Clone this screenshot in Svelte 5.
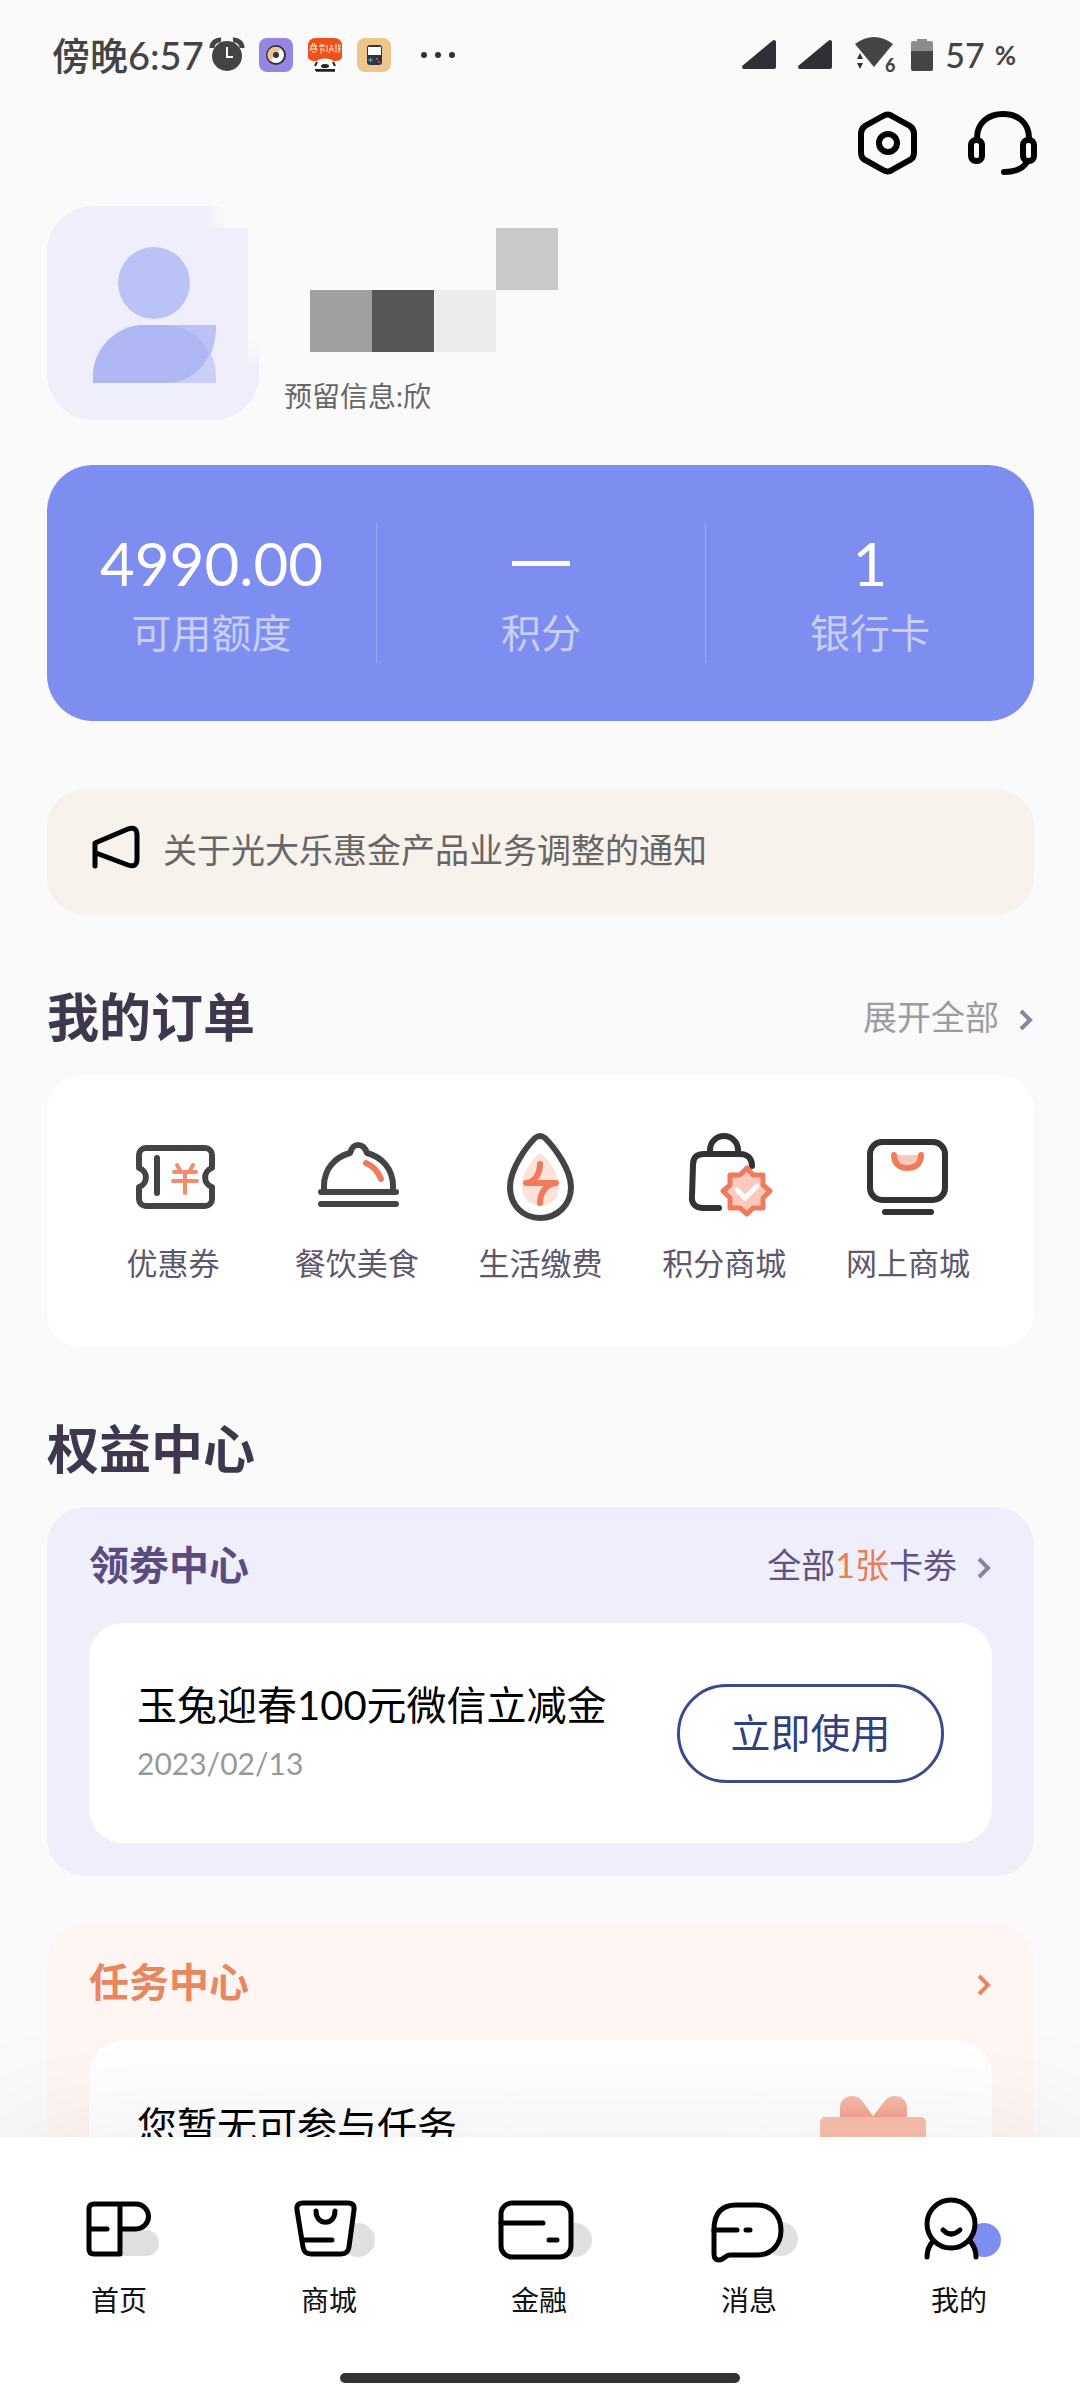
<script lang="ts">
    type Item = { icon: string; label: string };

    const stats = [
        { value: '4990.00', label: '可用额度' },
        { value: '', label: '积分' },
        { value: '1', label: '银行卡' }
    ];

    const orders: Item[] = [
        { icon: 'coupon', label: '优惠券' },
        { icon: 'food', label: '餐饮美食' },
        { icon: 'bill', label: '生活缴费' },
        { icon: 'points', label: '积分商城' },
        { icon: 'shop', label: '网上商城' }
    ];

    const tabs: Item[] = [
        { icon: 'home', label: '首页' },
        { icon: 'mall', label: '商城' },
        { icon: 'finance', label: '金融' },
        { icon: 'message', label: '消息' },
        { icon: 'me', label: '我的' }
    ];

    let active = $state('me');
</script>

{#snippet chevron()}
    <svg class="chevron" viewBox="0 0 16 24" width="16" height="24" aria-hidden="true">
        <path d="M3 3 L12 12 L3 21" fill="none" stroke="currentColor" stroke-width="4" />
    </svg>
{/snippet}

{#snippet orderIcon(name: string)}
    <svg class="order-icon" viewBox="0 0 96 96" aria-hidden="true">
        {#if name === 'coupon'}
            <path d="M22 19 H80 a7 7 0 0 1 7 7 V39 a10 10 0 0 0 0 19 V70 a7 7 0 0 1 -7 7 H21 a7 7 0 0 1 -7 -7 V58 a10 10 0 0 0 0 -19 V26 a7 7 0 0 1 7 -7 Z M32 29 V64" />
            <path class="accent thin" d="M52 36 L56 43 M68 36 L64 43 M49 43 H71 M48 52 H72 M60 43 V64" />
        {:else if name === 'food'}
            <path d="M12 63 H87 M12 75 H87 M15 62 V57 C15 40 26 28 41 24 C43 18 45 16 49 16 C53 16 56 18 58 24 C73 28 84 40 84 57 V62" />
            <path class="accent" d="M57 34 Q67 38 72 50" />
        {:else if name === 'bill'}
            <path class="soft" d="M48 24 C56 30 67 44 67 57 C67 69 59 77 48 77 C38 77 30 69 30 57 C30 44 40 30 48 24 Z" />
            <path d="M43 9 Q48 5 53 9 C63 19 79 41 79 58 C79 76 65 89 48 89 C31 89 18 76 18 58 C18 41 33 19 43 9 Z" />
            <path class="accent" d="M48 35 C48 45 42 54 34 54 H64 C54 55 48 64 48 74" />
        {:else if name === 'points'}
            <g class="dark">
                <path d="M34 24 V21 A14 14 0 0 1 62 21 V24" />
                <path d="M76 37 C76 29 71 25 64 25 H28 C20 25 17 29 17 36 L16 67 C15 75 20 79 27 79 H43" />
            </g>
            <path class="accent badge" d="M71 39 L77 46 L87 46 L87 56 L94 62 L87 69 L87 79 L77 79 L71 85 L64 79 L54 79 L54 69 L47 62 L54 56 L54 46 L64 46 Z" />
            <path class="check" d="M61 61 L69 69 L81 57" />
        {:else}
            <g class="dark">
                <rect x="10" y="13" width="75" height="58" rx="12" />
                <path d="M25 83 H71" />
            </g>
            <path class="accent smile" d="M34 26 C34 35 40 39 47 39 C55 39 61 35 61 26" />
        {/if}
    </svg>
{/snippet}

{#snippet tabIcon(name: string)}
    <svg class="tab-icon" viewBox="0 0 100 68" aria-hidden="true">
        {#if name === 'home'}
            <rect class="shade" x="39" y="34" width="51" height="26" rx="13" />
            <path class="body" d="M51 58 H25 Q20 58 20 53 V13 Q20 8 25 8 H67 A12 12 0 0 1 67 33 H51 Z M51 8 V58" />
            <path d="M21 33 H38" />
        {:else if name === 'mall'}
            <circle class="shade" cx="79" cy="44" r="17" />
            <path class="body" d="M24 7 H69 Q76 7 75 14 L70 51 Q69 58 62 58 H32 Q25 58 24 51 L18 14 Q17 7 24 7 Z" />
            <path d="M37 15 C37 30 56 30 56 15 M24 44 H53" />
        {:else if name === 'finance'}
            <circle class="shade" cx="86" cy="44" r="17" />
            <rect class="body" x="12" y="7" width="70" height="54" rx="11" />
            <path d="M12 27 H54 M60 44 H68" />
        {:else if name === 'message'}
            <circle class="shade" cx="82" cy="43" r="17" />
            <path class="body" d="M15 34 C15 18 22 9 37 9 H58 C73 9 82 20 82 34 C82 48 73 59 58 59 H31 C26 59 25 64 20 64 Q15 64 15 58 Z" />
            <path d="M15 34 H38 M47 34 H51" />
        {:else}
            <circle class="shade on" cx="75" cy="44" r="17" />
            <path class="body" d="M18 61 Q18 52 24 45 L61 45 Q67 52 67 61" />
            <circle class="body" cx="42" cy="28" r="24" />
            <path d="M34 34 Q42 42 51 34" />
        {/if}
    </svg>
{/snippet}

<div class="screen">
    <header class="status">
        <div class="status-left">
            <span class="clock">傍晚6:57</span>
            <svg width="34" height="34" viewBox="0 0 34 34" aria-hidden="true">
                <path d="M2 10 A8 8 0 0 1 11 2 M32 10 A8 8 0 0 0 23 2" stroke="#444" stroke-width="5" fill="none" />
                <circle cx="17" cy="18" r="15" fill="#444" />
                <path d="M17 9 V19 H23" stroke="#fafafa" stroke-width="2" fill="none" />
            </svg>
            <svg class="app" width="34" height="34" viewBox="0 0 34 34" aria-hidden="true">
                <rect width="34" height="34" rx="8" fill="#9686e2" />
                <circle cx="17" cy="17" r="9" fill="#fff" stroke="#33303c" stroke-width="2" />
                <path d="M11 23 A8 8 0 0 1 22 11 Z" fill="#eac591" />
                <circle cx="17" cy="17" r="3" fill="#33303c" />
            </svg>
            <svg class="app" width="34" height="34" viewBox="0 0 34 34" aria-hidden="true">
                <path d="M8 0 H26 Q34 0 34 8 V20 Q32 23 28 23 H6 Q2 23 0 20 V8 Q0 0 8 0 Z" fill="#ee5119" />
                <path d="M2 8 H9 M2 11 H9 M5 5 L2 13 M6 5 L9 13 M4 14 H8 M11 8 H17 M13 6 V9 M15 6 V9 M12 11 H16 V14 M13 11 V16 M19 7 V14 M22 8 H25 M21 11 H26 M24 8 L21 15 M24 11 L26 14 M28 6 V15 M30 8 H33 M30 11 H33 M31 6 V15" stroke="#ffe3d3" stroke-width="1" fill="none" />
                <path d="M4 34 C1 16 33 16 30 34 Z" fill="#fff" />
                <path d="M8 32 H27 V34 H8 Z" fill="#c9252b" />
                <path d="M9 24 L7 28 M25 24 L27 28 M7 32 H27" stroke="#222" stroke-width="2" />
                <ellipse cx="17" cy="28" rx="4" ry="2" fill="#222" />
            </svg>
            <svg class="app" width="34" height="34" viewBox="0 0 34 34" aria-hidden="true">
                <rect width="34" height="34" rx="8" fill="#edc68b" />
                <rect x="10" y="7" width="15" height="20" rx="3" fill="#33343f" />
                <rect x="11" y="9" width="13" height="8" fill="#fff" />
                <path d="M11 22 H16 M13.500 19.500 V24.500" stroke="#55b4c4" stroke-width="1" />
                <circle cx="20" cy="21" r="1" fill="#e0557a" />
                <circle cx="22" cy="24" r="1" fill="#e0557a" />
            </svg>
            <svg class="more" width="36" height="8" viewBox="0 0 36 8" aria-hidden="true">
                <circle cx="4" cy="4" r="3" /><circle cx="18" cy="4" r="3" /><circle cx="32" cy="4" r="3" />
            </svg>
        </div>
        <div class="status-right">
            {#each [1, 2] as sim (sim)}
                <svg class="signal" width="36" height="32" viewBox="0 0 36 32" aria-hidden="true">
                    <path d="M2 28 L32 3 V28 Z" fill="#2f2f35" stroke="#2f2f35" stroke-width="4" stroke-linejoin="round" />
                </svg>
            {/each}
            <svg width="42" height="38" viewBox="0 0 42 38" aria-hidden="true">
                <path d="M1 8 Q20 -6 39 8 L20 31 Z" fill="#444" />
                <path d="M6 17 L9 23 H3 Z M6 33 L9 27 H3 Z" fill="#333" />
                <text x="31" y="36" font-size="18" font-weight="900" fill="#444">6</text>
            </svg>
            <svg class="battery" width="22" height="34" viewBox="0 0 22 34" aria-hidden="true">
                <path d="M0 5 Q0 3 2 3 H6 V1 H16 V3 H20 Q22 3 22 5 V13 H0 Z" fill="#8c8c8c" />
                <path d="M0 13 H22 V31 Q22 33 20 33 H2 Q0 33 0 31 Z" fill="#444" />
            </svg>
            <span class="level">57</span>
            <span class="percent">%</span>
        </div>
    </header>

    <main>
        <div class="actions">
            <button aria-label="设置">
                <svg width="60" height="66" viewBox="0 0 60 66">
                    <path d="M25 6 Q30 3 34 6 L52 16 Q56 19 56 24 V42 Q56 48 52 50 L34 60 Q30 63 25 60 L7 50 Q3 48 3 42 V24 Q3 19 7 16 Z" />
                    <circle cx="30" cy="33" r="9" />
                </svg>
            </button>
            <button aria-label="客服">
                <svg width="70" height="66" viewBox="0 0 70 66">
                    <rect x="3" y="30" width="11" height="21" rx="5" />
                    <rect x="55" y="30" width="11" height="21" rx="5" />
                    <path d="M9 28 C9 13 20 4 35 4 C50 4 61 13 61 28" />
                    <path d="M59 52 C54 60 46 62 36 62" />
                </svg>
            </button>
        </div>

        <section class="profile">
            <svg class="avatar" viewBox="0 0 214 214" aria-label="头像">
                <defs>
                    <linearGradient id="fade-right">
                        <stop offset="0" stop-color="#fafafa" stop-opacity="0" />
                        <stop offset="1" stop-color="#fafafa" />
                    </linearGradient>
                    <linearGradient id="fade-down" x2="0" y2="1">
                        <stop offset="0" stop-color="#fafafa" />
                        <stop offset="1" stop-color="#fafafa" stop-opacity="0" />
                    </linearGradient>
                </defs>
                <rect width="212" height="214" rx="46" fill="#efeffb" />
                <rect x="160" width="20" height="22" fill="url(#fade-right)" />
                <rect x="180" width="34" height="22" fill="#fafafa" />
                <rect x="201" y="22" width="13" height="112" fill="#fafafa" />
                <rect x="201" y="134" width="13" height="28" fill="url(#fade-down)" />
                <rect x="180" y="22" width="21" height="26" fill="#efeffb" />
                <circle cx="107" cy="77" r="36" fill="#bac2f6" />
                <path d="M46 177 V170 C46 142 70 119 97 119 H118 C146 119 169 142 169 170 V177 Z" fill="#cbcff8" />
                <path d="M46 177 V170 C46 142 70 119 97 119 H169 C169 152 147 177 120 177 Z" fill="#aeb7f4" />
                <path d="M118 119 H169 C169 131 167 141 163 149 C155 131 138 119 118 119 Z" fill="#bac2f6" />
            </svg>
            <div class="who">
                <div class="mask" aria-hidden="true">
                    <i></i><i></i><i></i><i class="c4"></i>
                    <i class="c1"></i><i class="c2"></i><i class="c3"></i><i></i>
                </div>
                <p>预留信息:欣</p>
            </div>
        </section>

        <section class="stats">
            {#each stats as stat}
                <a href="#stats">
                    <strong>{#if stat.value}{stat.value}{:else}<span class="none"></span>{/if}</strong>
                    <span>{stat.label}</span>
                </a>
            {/each}
        </section>

        <a class="notice" href="#notice">
            <svg width="52" height="48" viewBox="0 0 52 48" aria-hidden="true">
                <path d="M4 43 V20 L37 6 Q46 3 46 12 V36 Q46 45 37 42 L5 30" />
            </svg>
            <span>关于光大乐惠金产品业务调整的通知</span>
        </a>

        <div class="section-head">
            <h2>我的订单</h2>
            <a href="#orders">展开全部 {@render chevron()}</a>
        </div>
        <section class="orders">
            {#each orders as item}
                <a href="#orders">
                    {@render orderIcon(item.icon)}
                    <span>{item.label}</span>
                </a>
            {/each}
        </section>

        <div class="section-head">
            <h2>权益中心</h2>
        </div>
        <section class="panel">
            <div class="panel-head">
                <h3>领劵中心</h3>
                <a href="#coupons"><span>全部<em>1张</em>卡劵</span> {@render chevron()}</a>
            </div>
            <div class="panel-body">
                <div>
                    <p class="name">玉兔迎春100元微信立减金</p>
                    <time>2023/02/13</time>
                </div>
                <button class="use">立即使用</button>
            </div>
        </section>

        <section class="panel tasks">
            <div class="panel-head">
                <h3>任务中心</h3>
                <a href="#tasks" aria-label="任务中心">{@render chevron()}</a>
            </div>
            <div class="panel-body">
                <p class="name">您暂无可参与任务</p>
                <svg width="106" height="106" viewBox="0 0 106 106" aria-hidden="true">
                    <defs>
                        <linearGradient id="bow" x2="0" y2="1">
                            <stop offset="0" stop-color="#f6bfae" />
                            <stop offset="1" stop-color="#f5a08a" />
                        </linearGradient>
                    </defs>
                    <path d="M20 24 V12 C20 3 27 0 32 0 C37 0 40 2 43 6 L53 20 L64 6 C67 2 70 0 75 0 C80 0 87 3 87 12 V24 Z" fill="url(#bow)" />
                    <rect y="21" width="106" height="28" rx="5" fill="#f8c0ad" />
                    <rect x="10" y="49" width="86" height="57" fill="#f6a58e" />
                </svg>
            </div>
        </section>
    </main>

    <footer>
        <nav>
            {#each tabs as tab}
                <button class:active={active === tab.icon} onclick={() => (active = tab.icon)}>
                    {@render tabIcon(tab.icon)}
                    <span>{tab.label}</span>
                </button>
            {/each}
        </nav>
        <div class="home-bar"></div>
    </footer>
</div>

<style>
    :global(body) {
        margin: 0;
        background: #fafafa;
    }

    .screen {
        height: 100vh;
        display: flex;
        flex-direction: column;
        overflow: hidden;
        background: #fafafa;
        color: #000;
        font-family: Lato, "Noto Sans CJK SC", sans-serif;
    }

    a {
        color: inherit;
        text-decoration: none;
    }

    button {
        border: 0;
        padding: 0;
        background: none;
        color: inherit;
        font-family: inherit;
    }

    h2, h3, p {
        margin: 0;
    }

    svg {
        display: block;
        flex: none;
        overflow: visible;
    }

    /* status bar */
    .status {
        height: 110px;
        flex: none;
        padding: 0 64px 0 52px;
        display: flex;
        align-items: center;
        justify-content: space-between;
        color: #444;
    }

    .status-left, .status-right {
        display: flex;
        align-items: center;
    }

    .clock {
        font-size: 38px;
        line-height: 48px;
        font-weight: 500;
        margin-right: 6px;
    }

    .app {
        margin-left: 15px;
    }

    .more {
        margin-left: 29px;
        fill: #333;
    }

    .signal {
        margin-right: 20px;
    }

    .battery {
        margin: 0 12px 0 15px;
    }

    .level {
        font-size: 34px;
        line-height: 40px;
        font-weight: 500;
    }

    .percent {
        margin-left: 10px;
        font-size: 26px;
        line-height: 40px;
        font-weight: 700;
    }

    main {
        flex: 1;
        min-height: 0;
        overflow: hidden;
        padding: 0 46px 0 47px;
    }

    .actions {
        display: flex;
        justify-content: flex-end;
        gap: 50px;
        margin-right: -4px;
    }

    .actions svg {
        fill: none;
        stroke: #000;
        stroke-width: 6;
        stroke-linecap: round;
    }

    .profile {
        display: flex;
        gap: 23px;
        margin-top: 30px;
    }

    .avatar {
        width: 214px;
        height: 214px;
    }

    .who {
        padding-top: 22px;
    }

    .mask {
        display: grid;
        grid-template-columns: repeat(4, 62px);
        grid-auto-rows: 62px;
        margin: 0 0 24px 26px;
    }

    .c1 { background: #a0a0a0; }
    .c2 { background: #575757; }
    .c3 { background: #ececec; }
    .c4 { background: #c9c9c9; }

    .who p {
        font-size: 28px;
        line-height: 40px;
        color: #666;
    }

    .stats {
        display: grid;
        grid-template-columns: repeat(3, 1fr);
        margin-top: 45px;
        padding: 58px 0;
        border-radius: 46px;
        background: #7e8df0;
        color: #fff;
    }

    .stats a {
        display: flex;
        flex-direction: column;
        align-items: center;
        height: 140px;
    }

    .stats a + a {
        border-left: 1px solid #9ba7f4;
    }

    .stats strong {
        height: 80px;
        font-size: 60px;
        line-height: 80px;
        font-weight: 400;
        display: flex;
        align-items: center;
    }

    .stats span {
        font-size: 40px;
        line-height: 60px;
        color: #c8cff9;
    }

    .stats .none {
        width: 58px;
        height: 5px;
        background: #fff;
    }

    .notice {
        display: flex;
        align-items: center;
        gap: 20px;
        height: 122px;
        margin-top: 68px;
        padding: 0 44px 4px;
        border-radius: 38px;
        background: #f7f2ec;
        font-size: 34px;
        line-height: 48px;
        color: #666;
    }

    .notice svg {
        margin-bottom: 6px;
        fill: none;
        stroke: #000;
        stroke-width: 5;
        stroke-linecap: round;
        stroke-linejoin: round;
    }

    .section-head {
        display: flex;
        align-items: center;
        justify-content: space-between;
        height: 84px;
        margin: 60px 0 16px;
    }

    h2 {
        font-size: 52px;
        line-height: 72px;
        font-weight: 700;
        color: #3f374e;
    }

    .section-head a, .panel-head a {
        display: flex;
        align-items: center;
        gap: 19px;
        font-size: 34px;
        line-height: 48px;
        color: #9c9aa3;
    }

    .chevron {
        margin-top: 6px;
    }

    .section-head .chevron, .panel-head .chevron {
        color: #8b83a3;
    }

    .orders {
        display: grid;
        grid-template-columns: repeat(5, 1fr);
        padding: 54px 34px 62px;
        border-radius: 34px;
        background: #fff;
    }

    .orders a {
        display: flex;
        flex-direction: column;
        align-items: center;
        gap: 16px;
        font-size: 31px;
        line-height: 44px;
        color: #5f586d;
    }

    .order-icon {
        width: 96px;
        height: 96px;
        fill: none;
        stroke: #444;
        stroke-width: 6;
        stroke-linecap: round;
        stroke-linejoin: round;
    }

    .dark { stroke: #333; }
    .accent { stroke: #f27a5c; }
    .thin { stroke: #f58a6c; stroke-width: 4; }
    .soft { fill: #fde2da; stroke: none; }
    .badge { fill: #fcc9bf; stroke-width: 5; }
    .smile { fill: #fcc9bf; }
    .check { stroke: #fff; stroke-width: 5; }

    .panel {
        padding: 0 42px 33px;
        border-radius: 38px;
        background: #efeefb;
    }

    .panel + .panel {
        margin-top: 48px;
    }

    .panel-head {
        display: flex;
        align-items: center;
        justify-content: space-between;
        height: 116px;
    }

    h3 {
        font-size: 40px;
        line-height: 56px;
        font-weight: 700;
        color: #5b4c80;
    }

    .panel-head a {
        color: #5f5280;
    }

    em {
        font-style: normal;
        color: #ec7d52;
    }

    .panel-body {
        display: flex;
        align-items: center;
        justify-content: space-between;
        height: 220px;
        padding: 0 48px;
        border-radius: 34px;
        background: #fff;
    }

    .name {
        font-size: 40px;
        line-height: 60px;
        color: #000;
    }

    time {
        display: block;
        font-size: 30px;
        line-height: 56px;
        color: #999;
    }

    .use {
        width: 267px;
        height: 99px;
        border: 3px solid #3b4a8c;
        border-radius: 50px;
        font-size: 40px;
        line-height: 60px;
        color: #2f3f80;
    }

    .tasks {
        background: #fff6f4;
    }

    .tasks h3, .tasks .panel-head .chevron {
        color: #e8875f;
    }

    .tasks .panel-body {
        align-items: flex-start;
        padding: 56px 66px 0 48px;
        height: 164px;
    }

    /* tab bar */
    footer {
        position: relative;
        flex: none;
        background: #fff;
        box-shadow: 0 0 140px rgba(0, 0, 0, 0.08);
    }

    nav {
        display: flex;
        padding: 59px 16px 0 14px;
    }

    nav button {
        flex: 1;
        display: flex;
        flex-direction: column;
        align-items: center;
        gap: 16px;
        font-size: 28px;
        line-height: 40px;
        color: #111;
    }

    .tab-icon {
        width: 100px;
        height: 68px;
        fill: none;
        stroke: #000;
        stroke-width: 5;
        stroke-linecap: round;
        stroke-linejoin: round;
    }

    .body { fill: #fff; }
    .shade { fill: #e0e0e0; stroke: none; }
    .shade.on { fill: #7e8df0; }

    .home-bar {
        width: 37%;
        height: 10px;
        margin: 53px auto 17px;
        border-radius: 5px;
        background: #333;
    }
</style>
